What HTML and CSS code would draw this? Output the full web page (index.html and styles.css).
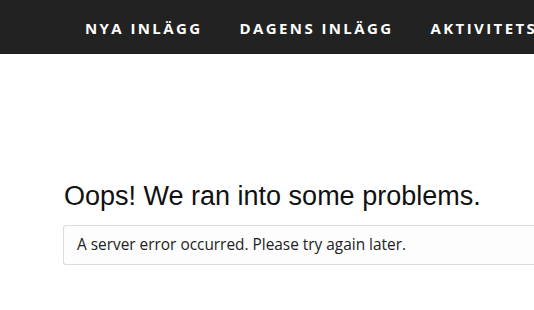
FILE: index.html
```html
<!DOCTYPE html>
<html lang="sv">
<head>
<meta charset="utf-8">
<link rel="stylesheet" href="styles.css">
</head>
<body>
<header class="topbar">
  <nav class="nav">
    <a class="nav-link" href="#">Nya inlägg</a>
    <a class="nav-link" href="#">Dagens inlägg</a>
    <a class="nav-link" href="#">Aktivitetsflöde</a>
  </nav>
</header>
<main class="content">
  <h1 class="title">Oops! We ran into some problems.</h1>
  <div class="error-box">A server error occurred. Please try again later.</div>
</main>
</body>
</html>
```
FILE: styles.css
```css
html, body {
  margin: 0;
  padding: 0;
  background: #fff;
  overflow: hidden;
}
body {
  width: 534px;
  height: 310px;
}
.topbar {
  height: 54px;
  background: #222222;
  display: flex;
  align-items: center;
  overflow: hidden;
  white-space: nowrap;
}
.nav {
  display: flex;
  gap: 37px;
  padding-left: 85px;
}
.nav-link {
  font-family: "Open Sans", sans-serif;
  font-weight: 700;
  font-size: 15px;
  letter-spacing: 2.4px;
  text-transform: uppercase;
  color: #fff;
  text-decoration: none;
  margin-top: 1px;
}
.content {
  padding: 127px 0 0 63px;
}
.title {
  margin: 0 0 0 1px;
  font-family: "Liberation Sans", Arial, sans-serif;
  font-weight: 400;
  font-size: 27px;
  line-height: 31px;
  color: #111;
}
.error-box {
  margin-top: 13px;
  border: 1px solid #dcdcdc;
  border-right: none;
  border-radius: 3px 0 0 3px;
  background: #fdfdfd;
  padding: 9px 13px 10px;
  font-family: "Open Sans", sans-serif;
  font-size: 15.4px;
  line-height: 19px;
  color: #222;
  white-space: nowrap;
}
```
